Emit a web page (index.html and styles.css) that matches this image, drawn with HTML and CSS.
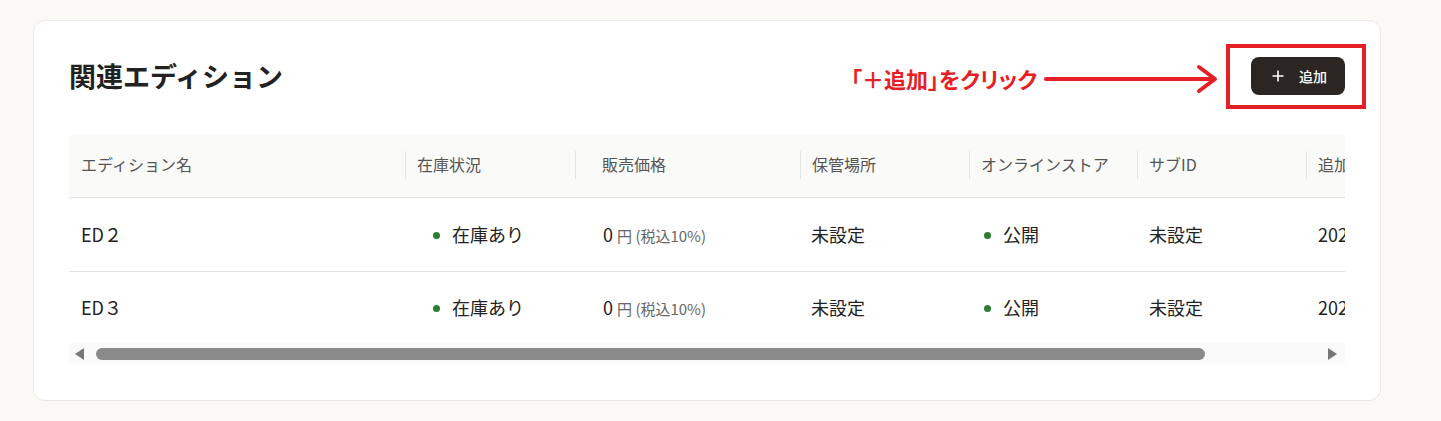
FILE: index.html
```html
<!DOCTYPE html>
<html lang="ja">
<head>
<meta charset="utf-8">
<title>関連エディション</title>
<link rel="stylesheet" href="styles.css">
</head>
<body>
<div class="page">
  <section class="card">
    <div class="card-head">
      <h2 class="title">関連エディション</h2>
      <button class="add-btn" type="button">
        <svg class="plus" width="12" height="12" viewBox="0 0 12 12"><path d="M6 0.5v11M0.5 6h11" stroke="#fff" stroke-width="1.6" fill="none"/></svg>
        <span>追加</span>
      </button>
    </div>

    <div class="table-wrap">
      <table class="ed-table">
        <colgroup>
          <col class="c1"><col class="c2"><col class="c3"><col class="c4"><col class="c5"><col class="c6"><col class="c7">
        </colgroup>
        <thead>
          <tr>
            <th class="h1">エディション名</th>
            <th class="h2 sep">在庫状況</th>
            <th class="h3 sep">販売価格</th>
            <th class="h4 sep">保管場所</th>
            <th class="h5 sep">オンラインストア</th>
            <th class="h6 sep">サブID</th>
            <th class="h7 sep">追加日</th>
          </tr>
        </thead>
        <tbody>
          <tr>
            <td class="d1">ED２</td>
            <td class="d2"><span class="dot"></span>在庫あり</td>
            <td class="d3">0 <span class="unit">円 (税込10%)</span></td>
            <td class="d4">未設定</td>
            <td class="d5"><span class="dot"></span>公開</td>
            <td class="d6">未設定</td>
            <td class="d7">2024/05/01</td>
          </tr>
          <tr>
            <td class="d1">ED３</td>
            <td class="d2"><span class="dot"></span>在庫あり</td>
            <td class="d3">0 <span class="unit">円 (税込10%)</span></td>
            <td class="d4">未設定</td>
            <td class="d5"><span class="dot"></span>公開</td>
            <td class="d6">未設定</td>
            <td class="d7">2024/05/01</td>
          </tr>
        </tbody>
      </table>
    </div>

    <div class="scrollbar">
      <span class="arrow-left"></span>
      <span class="thumb"></span>
      <span class="arrow-right"></span>
    </div>

    <div class="note-box"></div>
    <div class="note-text">「＋追加」をクリック</div>
    <svg class="note-arrow" width="176" height="30" viewBox="0 0 176 30">
      <path d="M3 15H171" stroke="#e61f26" stroke-width="4" stroke-linecap="round" fill="none"/>
      <path d="M156 3L172 15L156 27" stroke="#e61f26" stroke-width="4" stroke-linecap="round" stroke-linejoin="round" fill="none"/>
    </svg>
  </section>
</div>
</body>
</html>
```

FILE: styles.css
```css
* { box-sizing: border-box; }

html, body {
  margin: 0;
  background: #faf9f6;
}

body {
  font-family: "Noto Sans CJK JP", "Noto Sans", sans-serif;
  color: #222;
}

.page {
  padding: 20px 0 20px 33px;
}

.card {
  position: relative;
  width: 1348px;
  background: #fff;
  border: 1px solid #ebe8e2;
  border-radius: 12px;
  padding: 36px 35px 36px 35px;
}

.card-head {
  display: flex;
  align-items: center;
  justify-content: space-between;
  height: 38px;
}

.title {
  margin: 0;
  font-size: 27px;
  font-weight: 700;
  line-height: 38px;
  color: #222;
}

.add-btn {
  display: flex;
  align-items: center;
  width: 94px;
  height: 38px;
  padding: 0 0 0 21px;
  gap: 15px;
  border: none;
  border-radius: 8px;
  background: #2b2622;
  color: #fff;
  font-family: inherit;
  font-size: 14px;
  font-weight: 500;
}

.plus { display: block; }

.table-wrap {
  margin-top: 40px;
  width: 1276px;
  overflow: hidden;
}

.ed-table {
  border-collapse: collapse;
  table-layout: fixed;
  width: 1437px;
}

.c1 { width: 336px; }
.c2 { width: 170px; }
.c3 { width: 225px; }
.c4 { width: 169px; }
.c5 { width: 168px; }
.c6 { width: 169px; }
.c7 { width: 200px; }

.ed-table th {
  position: relative;
  height: 62px;
  background: #fafaf8;
  border-bottom: 1px solid #e2e2e2;
  text-align: left;
  font-weight: 400;
  font-size: 16px;
  line-height: 20px;
  color: #555;
  padding: 0 0 3px 12px;
  white-space: nowrap;
}

.ed-table th.sep::before {
  content: "";
  position: absolute;
  left: 0;
  top: 16px;
  width: 1px;
  height: 28px;
  background: #e4e4e2;
}

.ed-table th.h3 { padding-left: 27px; }

.ed-table td {
  height: 74px;
  font-size: 18px;
  color: #222;
  padding: 0 0 1px 12px;
  white-space: nowrap;
  overflow: hidden;
}

.ed-table tbody tr:first-child td {
  border-bottom: 1px solid #e2e2e2;
}

.ed-table tbody tr:last-child td { height: 72px; }

.ed-table td.d2 { padding-left: 28px; }
.ed-table td.d3 { padding-left: 28px; }
.ed-table td.d4 { padding-left: 11px; }
.ed-table td.d5 { padding-left: 15px; }

.dot {
  display: inline-block;
  width: 7px;
  height: 7px;
  border-radius: 50%;
  background: #2e7d32;
  margin-right: 12px;
  vertical-align: 3px;
}

.unit {
  font-size: 15px;
  color: #666;
}

.scrollbar {
  position: relative;
  display: flex;
  align-items: center;
  width: 1276px;
  height: 21px;
  background: #fafafa;
  padding-left: 6px;
}

.arrow-left {
  width: 0;
  height: 0;
  border-top: 6px solid transparent;
  border-bottom: 6px solid transparent;
  border-right: 9px solid #777;
}

.thumb {
  margin-left: 12px;
  width: 1109px;
  height: 12px;
  border-radius: 6px;
  background: #8a8a8a;
}

.arrow-right {
  margin-left: 123px;
  width: 0;
  height: 0;
  border-top: 6px solid transparent;
  border-bottom: 6px solid transparent;
  border-left: 9px solid #777;
}

/* annotation overlay */
.note-box {
  position: absolute;
  left: 1192px;
  top: 23px;
  width: 140px;
  height: 65px;
  border: 4px solid #e61f26;
}

.note-text {
  position: absolute;
  left: 817px;
  top: 42px;
  font-size: 22px;
  line-height: 30px;
  font-weight: 700;
  color: #e61f26;
  white-space: nowrap;
  font-feature-settings: "palt";
}

.note-arrow {
  position: absolute;
  left: 1009px;
  top: 43px;
}
```
